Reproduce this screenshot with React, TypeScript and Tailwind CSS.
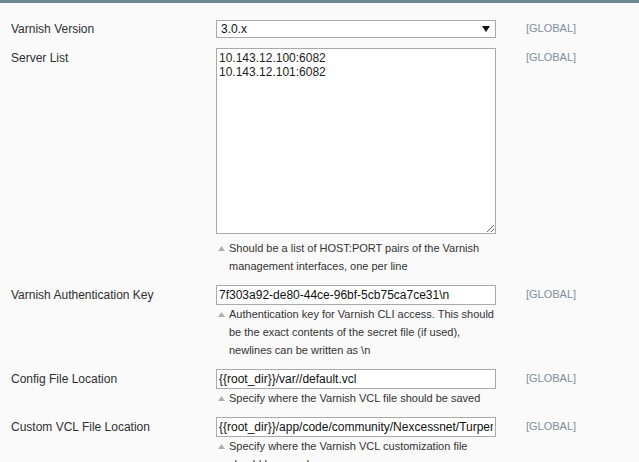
import React from "react";

type Row = {
  label: string;
  note?: string[];
  kind: "select" | "textarea" | "input";
  value: string;
};

const rows: Row[] = [
  { label: "Varnish Version", kind: "select", value: "3.0.x" },
  {
    label: "Server List",
    kind: "textarea",
    value: "10.143.12.100:6082\n10.143.12.101:6082",
    note: [
      "Should be a list of HOST:PORT pairs of the Varnish",
      "management interfaces, one per line",
    ],
  },
  {
    label: "Varnish Authentication Key",
    kind: "input",
    value: "7f303a92-de80-44ce-96bf-5cb75ca7ce31\\n",
    note: [
      "Authentication key for Varnish CLI access. This should",
      "be the exact contents of the secret file (if used),",
      "newlines can be written as \\n",
    ],
  },
  {
    label: "Config File Location",
    kind: "input",
    value: "{{root_dir}}/var//default.vcl",
    note: ["Specify where the Varnish VCL file should be saved"],
  },
  {
    label: "Custom VCL File Location",
    kind: "input",
    value: "{{root_dir}}/app/code/community/Nexcessnet/Turpentine/misc/custom.vcl",
    note: [
      "Specify where the Varnish VCL customization file",
      "should be saved",
    ],
  },
];

function Note({ lines, first }: { lines: string[]; first?: boolean }) {
  return (
    <div className={`relative pl-[13px] text-[11px] leading-[18px] text-[#333] ${first ? "mt-[5px]" : ""}`}>
      <svg className="absolute left-[2px] top-[7px]" width="7" height="5" viewBox="0 0 7 5">
        <polygon points="3.5,0 7,5 0,5" fill="#a7b1b9" />
      </svg>
      {lines.map((l, i) => (
        <div key={i} className="whitespace-nowrap">
          {l}
        </div>
      ))}
    </div>
  );
}

function Field({ row }: { row: Row }) {
  if (row.kind === "select") {
    return (
      <div className="mt-[1px] h-[18px] w-[280px] bg-white border border-[#aaa] flex items-center justify-between pl-[4px] pr-[5px] text-[12px] text-[#111]">
        <span>{row.value}</span>
        <svg width="8" height="6" viewBox="0 0 8 6">
          <polygon points="0,0 8,0 4,6" fill="#111" />
        </svg>
      </div>
    );
  }
  if (row.kind === "textarea") {
    return (
      <textarea
        readOnly
        defaultValue={row.value}
        className="block h-[186px] w-[280px] bg-white border border-[#aaa] px-[2px] pt-[2px] text-[12px] leading-[14px] text-[#222] outline-none"
      />
    );
  }
  return (
    <input
      readOnly
      value={row.value}
      className="block h-[20px] w-[280px] bg-white border border-[#aaa] px-[2px] text-[12px] text-[#111] outline-none"
    />
  );
}

export default function App() {
  return (
    <div
      className="w-[639px] h-[462px] overflow-hidden bg-[#fafafa]"
      style={{ fontFamily: '"Liberation Sans", Arial, sans-serif' }}
    >
      <div className="h-[3px] bg-[#6f8992]" />
      <div className="flex flex-col pt-[16px]">
        {rows.map((row, i) => (
          <div
            key={row.label}
            className={`flex ${i === 0 ? "" : i === 1 ? "mt-[9px]" : "mt-[10px]"}`}
          >
            <div className="w-[216px] shrink-0 pl-[11px] text-[12px] leading-[20px] text-[#2f2f2f]">
              {row.label}
            </div>
            <div className="w-[280px] shrink-0">
              <Field row={row} />
              {row.note && <Note lines={row.note} first={row.kind === "textarea"} />}
            </div>
            <div className="ml-[30px] text-[11px] leading-[18px] text-[#7f909c]">[GLOBAL]</div>
          </div>
        ))}
      </div>
    </div>
  );
}
